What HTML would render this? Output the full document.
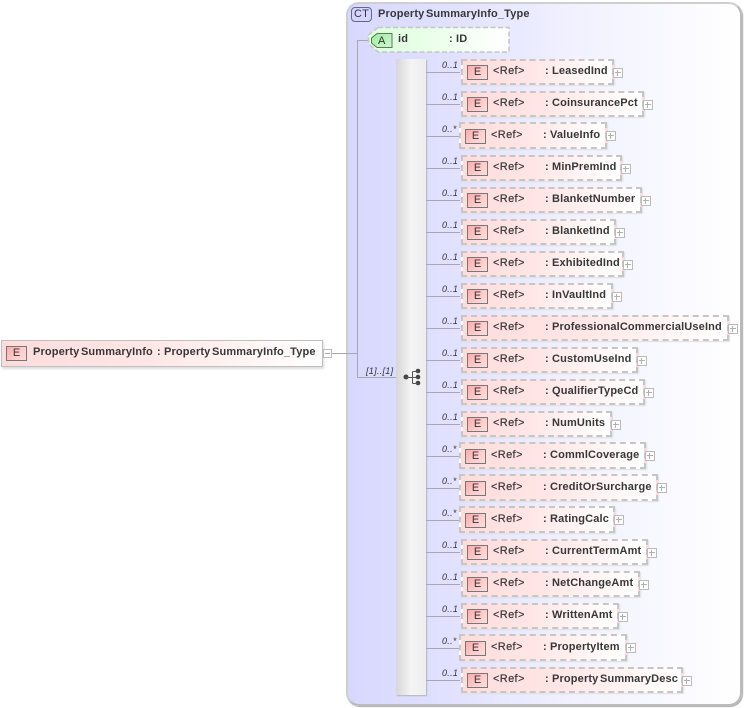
<!DOCTYPE html>
<html><head><meta charset="utf-8">
<style>
html,body{margin:0;padding:0;background:#fff}
#p{position:relative;width:746px;height:708px;overflow:hidden;font-family:"Liberation Sans",sans-serif;color:#383838;font-size:11px;font-weight:bold;letter-spacing:.15px}
#p div{position:absolute;white-space:pre;box-sizing:border-box}
i.g{display:inline-block;width:1.500px}
.l{background:#a8a8a8}
.ct{left:346px;top:2px;width:396px;height:704px;border:2px solid #cfcfcf;border-right-color:#bbb;border-bottom-color:#bbb;border-radius:13px;background:linear-gradient(90deg,#d8d8ff 0,#dedeff 20%,#f2f2ff 60%,#fff 100%);box-shadow:1px 1px 1px #aaa}
.seq{left:396px;top:59px;width:30px;height:636px;background:linear-gradient(90deg,#d6d6d6,#f4f4f4 50%,#ededed);box-shadow:1px 1px 1px #b4b4b4}
.e{width:21px;height:15px;border:1px solid #777;background:linear-gradient(135deg,#ffaaaa,#ffcccc 55%,#ffdcdc);text-align:center;font:11px/13px "Liberation Sans",sans-serif;color:#333;letter-spacing:0}
.r{left:0;width:746px;height:32px}
.r .ln{left:426px;top:13px;width:34px;height:1px;background:#a8a8a8}
.r .c{left:442px;top:0;font:italic 9px/12px "Liberation Sans",sans-serif;letter-spacing:.3px;color:#333}
.r .b{left:461px;top:0;height:26px;border:2px dashed #c6c6c6;background:linear-gradient(90deg,#ffdcdc,#ffe6e6 45%,#fff);box-shadow:1px 1px 1px #e0e0e0}
.r.s .b{left:459px;top:-1px;height:27px}
.r .e{left:467px;top:6px}
.r.s .e{left:465px}
.r .t{left:493px;top:5.500px;line-height:13px;font-weight:normal;letter-spacing:.35px;-webkit-text-stroke:.2px #333}
.r.s .t{left:491px;top:6px}
.r .n{left:545px;top:6px;line-height:13px}
.r.s .n{left:543px}
.pl{width:10px;height:10px;left:100%;top:7px;margin-left:1px;border:1px solid #bbb;background:#fff}
.pl:before{content:"";position:absolute;left:1px;top:3px;width:6px;height:1px;background:#b0b0b0}
.pl:after{content:"";position:absolute;left:3px;top:1px;width:1px;height:6px;background:#b0b0b0}
</style></head><body>
<div id="p">
<div class="ct"></div>
<div class="l" style="left:357px;top:40px;width:1px;height:338px"></div>
<div class="l" style="left:357px;top:40px;width:12px;height:1px"></div>
<div class="l" style="left:357px;top:377px;width:40px;height:1px"></div>
<div class="l" style="left:332px;top:353px;width:26px;height:1px"></div>

<div style="left:351px;top:7px;width:21px;height:15px;border:1px solid #66668a;border-radius:4px;background:#d4d4ff;text-align:center;font:11px/13px 'Liberation Sans',sans-serif">CT</div>
<div style="left:378px;top:8px;line-height:13px">Property<i class="g"></i>SummaryInfo_Type</div>

<svg style="position:absolute;left:366px;top:25px" width="148" height="30">
<defs><linearGradient id="g" x1="0" x2="1" y1="0" y2="0"><stop offset="0" stop-color="#dcffdc"/><stop offset=".5" stop-color="#ecffec"/><stop offset="1" stop-color="#fff"/></linearGradient>
<linearGradient id="h" x1="0" x2="1" y1="0" y2="1"><stop offset="0" stop-color="#9ee89e"/><stop offset="1" stop-color="#d0f8d0"/></linearGradient></defs>
<path d="M12 2.500H143V27H12L2.500 19V10Z" fill="url(#g)" stroke="#c6c6c6" stroke-width="1.6" stroke-dasharray="5 2.500"/>
<path d="M11 8.500H26V22.500H11L5.500 18V13Z" fill="url(#h)" stroke="#5a7a5a"/>
<text x="12" y="19" font-family="Liberation Sans" font-size="11" font-weight="normal" fill="#333">A</text>
</svg>
<div style="left:398px;top:33px;line-height:13px">id</div>
<div style="left:449px;top:33px;line-height:13px">: ID</div>

<div style="left:1px;top:340px;width:322px;height:27px;border:1px solid #c0c0c0;background:linear-gradient(90deg,#ffdcdc,#ffe6e6 45%,#fff);box-shadow:1px 2px 2px #ddd"></div>
<div class="e" style="left:6px;top:346px">E</div>
<div style="left:33px;top:346px;line-height:13px">Property<i class="g"></i>SummaryInfo</div>
<div style="left:157px;top:346px;line-height:13px">: Property<i class="g"></i>SummaryInfo_Type</div>
<div style="left:323px;top:349px;width:9px;height:9px;border:1px solid #bbb;background:#fff"><div style="left:1px;top:3px;width:5px;height:1px;background:#aaa"></div></div>

<div style="left:366px;top:365px;font:italic 9px/12px 'Liberation Sans',sans-serif;color:#333;letter-spacing:.3px">[1]..[1]</div>

<div class="seq"></div>
<svg style="position:absolute;left:400px;top:366px" width="24" height="22" fill="#444" stroke="#555">
<circle cx="6" cy="11" r="2.500" stroke="none"/><circle cx="18" cy="5" r="2.300" stroke="none"/><circle cx="18" cy="11" r="2.300" stroke="none"/><circle cx="18" cy="17" r="2.300" stroke="none"/>
<path d="M6 11.500H18M12.500 5.500V17.500M12.500 5.500H18M12.500 17.500H18" fill="none"/>
</svg>

<div class="r" style="top:59px"><div class="ln"></div><div class="c">0..1</div><div class="b" style="width:153px"><div class="pl"></div></div><div class="e">E</div><div class="t">&lt;Ref&gt;</div><div class="n">: LeasedInd</div></div>
<div class="r" style="top:91px"><div class="ln"></div><div class="c">0..1</div><div class="b" style="width:183px"><div class="pl"></div></div><div class="e">E</div><div class="t">&lt;Ref&gt;</div><div class="n">: CoinsurancePct</div></div>
<div class="r s" style="top:123px"><div class="ln"></div><div class="c">0..*</div><div class="b" style="width:148px"><div class="pl"></div></div><div class="e">E</div><div class="t">&lt;Ref&gt;</div><div class="n">: ValueInfo</div></div>
<div class="r" style="top:155px"><div class="ln"></div><div class="c">0..1</div><div class="b" style="width:161px"><div class="pl"></div></div><div class="e">E</div><div class="t">&lt;Ref&gt;</div><div class="n">: MinPremInd</div></div>
<div class="r" style="top:187px"><div class="ln"></div><div class="c">0..1</div><div class="b" style="width:181px"><div class="pl"></div></div><div class="e">E</div><div class="t">&lt;Ref&gt;</div><div class="n">: BlanketNumber</div></div>
<div class="r" style="top:219px"><div class="ln"></div><div class="c">0..1</div><div class="b" style="width:155px"><div class="pl"></div></div><div class="e">E</div><div class="t">&lt;Ref&gt;</div><div class="n">: BlanketInd</div></div>
<div class="r" style="top:251px"><div class="ln"></div><div class="c">0..1</div><div class="b" style="width:163px"><div class="pl"></div></div><div class="e">E</div><div class="t">&lt;Ref&gt;</div><div class="n">: ExhibitedInd</div></div>
<div class="r" style="top:283px"><div class="ln"></div><div class="c">0..1</div><div class="b" style="width:152px"><div class="pl"></div></div><div class="e">E</div><div class="t">&lt;Ref&gt;</div><div class="n">: InVaultInd</div></div>
<div class="r" style="top:315px"><div class="ln"></div><div class="c">0..1</div><div class="b" style="width:268px"><div class="pl"></div></div><div class="e">E</div><div class="t">&lt;Ref&gt;</div><div class="n">: ProfessionalCommercialUseInd</div></div>
<div class="r" style="top:347px"><div class="ln"></div><div class="c">0..1</div><div class="b" style="width:177px"><div class="pl"></div></div><div class="e">E</div><div class="t">&lt;Ref&gt;</div><div class="n">: CustomUseInd</div></div>
<div class="r" style="top:379px"><div class="ln"></div><div class="c">0..1</div><div class="b" style="width:184px"><div class="pl"></div></div><div class="e">E</div><div class="t">&lt;Ref&gt;</div><div class="n">: QualifierTypeCd</div></div>
<div class="r" style="top:411px"><div class="ln"></div><div class="c">0..1</div><div class="b" style="width:151px"><div class="pl"></div></div><div class="e">E</div><div class="t">&lt;Ref&gt;</div><div class="n">: NumUnits</div></div>
<div class="r s" style="top:443px"><div class="ln"></div><div class="c">0..*</div><div class="b" style="width:187px"><div class="pl"></div></div><div class="e">E</div><div class="t">&lt;Ref&gt;</div><div class="n">: CommlCoverage</div></div>
<div class="r s" style="top:475px"><div class="ln"></div><div class="c">0..*</div><div class="b" style="width:199px"><div class="pl"></div></div><div class="e">E</div><div class="t">&lt;Ref&gt;</div><div class="n">: CreditOrSurcharge</div></div>
<div class="r s" style="top:507px"><div class="ln"></div><div class="c">0..*</div><div class="b" style="width:156px"><div class="pl"></div></div><div class="e">E</div><div class="t">&lt;Ref&gt;</div><div class="n">: RatingCalc</div></div>
<div class="r" style="top:539px"><div class="ln"></div><div class="c">0..1</div><div class="b" style="width:187px"><div class="pl"></div></div><div class="e">E</div><div class="t">&lt;Ref&gt;</div><div class="n">: CurrentTermAmt</div></div>
<div class="r" style="top:571px"><div class="ln"></div><div class="c">0..1</div><div class="b" style="width:179px"><div class="pl"></div></div><div class="e">E</div><div class="t">&lt;Ref&gt;</div><div class="n">: NetChangeAmt</div></div>
<div class="r" style="top:603px"><div class="ln"></div><div class="c">0..1</div><div class="b" style="width:158px"><div class="pl"></div></div><div class="e">E</div><div class="t">&lt;Ref&gt;</div><div class="n">: WrittenAmt</div></div>
<div class="r s" style="top:635px"><div class="ln"></div><div class="c">0..*</div><div class="b" style="width:168px"><div class="pl"></div></div><div class="e">E</div><div class="t">&lt;Ref&gt;</div><div class="n">: PropertyItem</div></div>
<div class="r" style="top:667px"><div class="ln"></div><div class="c">0..1</div><div class="b" style="width:222px"><div class="pl"></div></div><div class="e">E</div><div class="t">&lt;Ref&gt;</div><div class="n">: Property<i class="g"></i>SummaryDesc</div></div>
</div>
</body></html>
